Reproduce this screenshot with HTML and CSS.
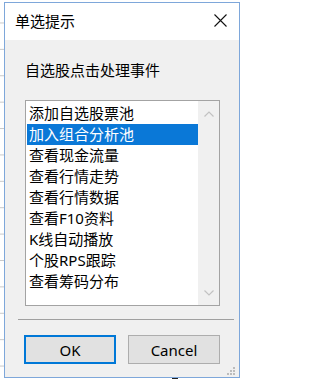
FILE: index.html
```html
<!DOCTYPE html>
<html lang="zh-CN">
<head>
<meta charset="utf-8">
<title>单选提示</title>
<link rel="stylesheet" href="styles.css">
</head>
<body>
<div class="desktop">
  <div class="window">
    <div class="titlebar">
      <span class="title">单选提示</span>
      <svg class="close" width="13" height="13" viewBox="0 0 13 13"><path d="M0.5 0.5L12.5 12.5M12.5 0.5L0.5 12.5" stroke="#111" stroke-width="1.1" fill="none"/></svg>
    </div>
    <div class="content">
      <div class="label">自选股点击处理事件</div>
      <div class="listbox">
        <ul class="items">
          <li>添加自选股票池</li>
          <li class="selected">加入组合分析池</li>
          <li>查看现金流量</li>
          <li>查看行情走势</li>
          <li>查看行情数据</li>
          <li>查看F10资料</li>
          <li>K线自动播放</li>
          <li>个股RPS跟踪</li>
          <li>查看筹码分布</li>
        </ul>
        <div class="scrollbar">
          <svg width="10" height="6" viewBox="0 0 10 6"><path d="M0.5 5.5L5 1L9.5 5.5" stroke="#c2c2c2" stroke-width="1.2" fill="none"/></svg>
          <svg width="10" height="6" viewBox="0 0 10 6"><path d="M0.5 0.5L5 5L9.5 0.5" stroke="#c2c2c2" stroke-width="1.2" fill="none"/></svg>
        </div>
      </div>
      <div class="separator"></div>
      <div class="buttons">
        <button class="btn btn-default">OK</button>
        <button class="btn">Cancel</button>
      </div>
    </div>
    <svg class="grip" width="9" height="9" viewBox="0 0 9 9">
      <rect x="6" y="0" width="2" height="2" fill="#bcbcbc"/>
      <rect x="3" y="3" width="2" height="2" fill="#bcbcbc"/>
      <rect x="6" y="3" width="2" height="2" fill="#bcbcbc"/>
      <rect x="0" y="6" width="2" height="2" fill="#bcbcbc"/>
      <rect x="3" y="6" width="2" height="2" fill="#bcbcbc"/>
      <rect x="6" y="6" width="2" height="2" fill="#bcbcbc"/>
    </svg>
  </div>
  <div class="bg-mark"></div>
</div>
</body>
</html>
```

FILE: styles.css
```css
html, body {
  margin: 0;
  padding: 0;
}

body {
  width: 240px;
  height: 381px;
  overflow: hidden;
  background-color: #ffffff;
  background-image: linear-gradient(to bottom, transparent 22px, #c8c8c8 22px, #c8c8c8 23px, transparent 23px);
  background-size: 4px 26.4px;
  background-repeat: repeat-y;
  background-position: 0 0;
  font-family: "Noto Sans", "Noto Sans CJK SC", sans-serif;
  color: #000;
}

.desktop {
  position: relative;
  width: 240px;
  height: 381px;
  padding-top: 2px;
  box-sizing: border-box;
}

.window {
  position: relative;
  margin-left: 4px;
  width: 236px;
  height: 376px;
  box-sizing: border-box;
  border: 1px solid #7ea7da;
  background: #f0f0f0;
  display: flex;
  flex-direction: column;
}

.titlebar {
  height: 37px;
  background: #ffffff;
  display: flex;
  align-items: center;
  justify-content: space-between;
  padding: 0 12px 2px 10px;
  box-sizing: border-box;
  flex: none;
}

.title {
  font-size: 15px;
  line-height: 20px;
}

.close {
  display: block;
}

.content {
  flex: 1;
  display: flex;
  flex-direction: column;
  padding-top: 20px;
}

.label {
  font-size: 15px;
  line-height: 20px;
  height: 20px;
  padding-left: 20px;
}

.listbox {
  margin: 20px 0 0 20px;
  width: 195px;
  height: 206px;
  box-sizing: border-box;
  border: 1px solid #a3a3a3;
  background: #ffffff;
  display: flex;
}

.items {
  list-style: none;
  margin: 0;
  padding: 2px 0 0 1px;
  flex: 1;
  overflow: hidden;
}

.items li {
  height: 21px;
  line-height: 21px;
  font-size: 15px;
  padding-left: 2px;
  white-space: nowrap;
}

.items li.selected {
  background: #0a78d7;
  color: #ffffff;
}

.scrollbar {
  width: 21px;
  flex: none;
  background: #f0f0f0;
  display: flex;
  flex-direction: column;
  justify-content: space-between;
  align-items: center;
  padding: 10px 0 9px;
  box-sizing: border-box;
}

.scrollbar svg {
  display: block;
}

.separator {
  margin: 13px 5px 0 13px;
  height: 1px;
  background: #a0a0a0;
}

.buttons {
  display: flex;
  gap: 12px;
  margin: 15px 0 0 19px;
}

.btn {
  width: 92px;
  height: 29px;
  box-sizing: border-box;
  border: 1px solid #adadad;
  background: #e1e1e1;
  font-family: "Noto Sans", "Noto Sans CJK SC", sans-serif;
  font-size: 15px;
  color: #000;
  padding: 0;
  margin: 0;
  line-height: 26px;
}

.btn-default {
  border: 2px solid #0078d7;
}

.grip {
  position: absolute;
  right: 3px;
  bottom: 1px;
}

.bg-mark {
  position: absolute;
  left: 172px;
  top: 378px;
  width: 6px;
  height: 3px;
  border-top: 1px solid #222;
  box-sizing: border-box;
}
```
